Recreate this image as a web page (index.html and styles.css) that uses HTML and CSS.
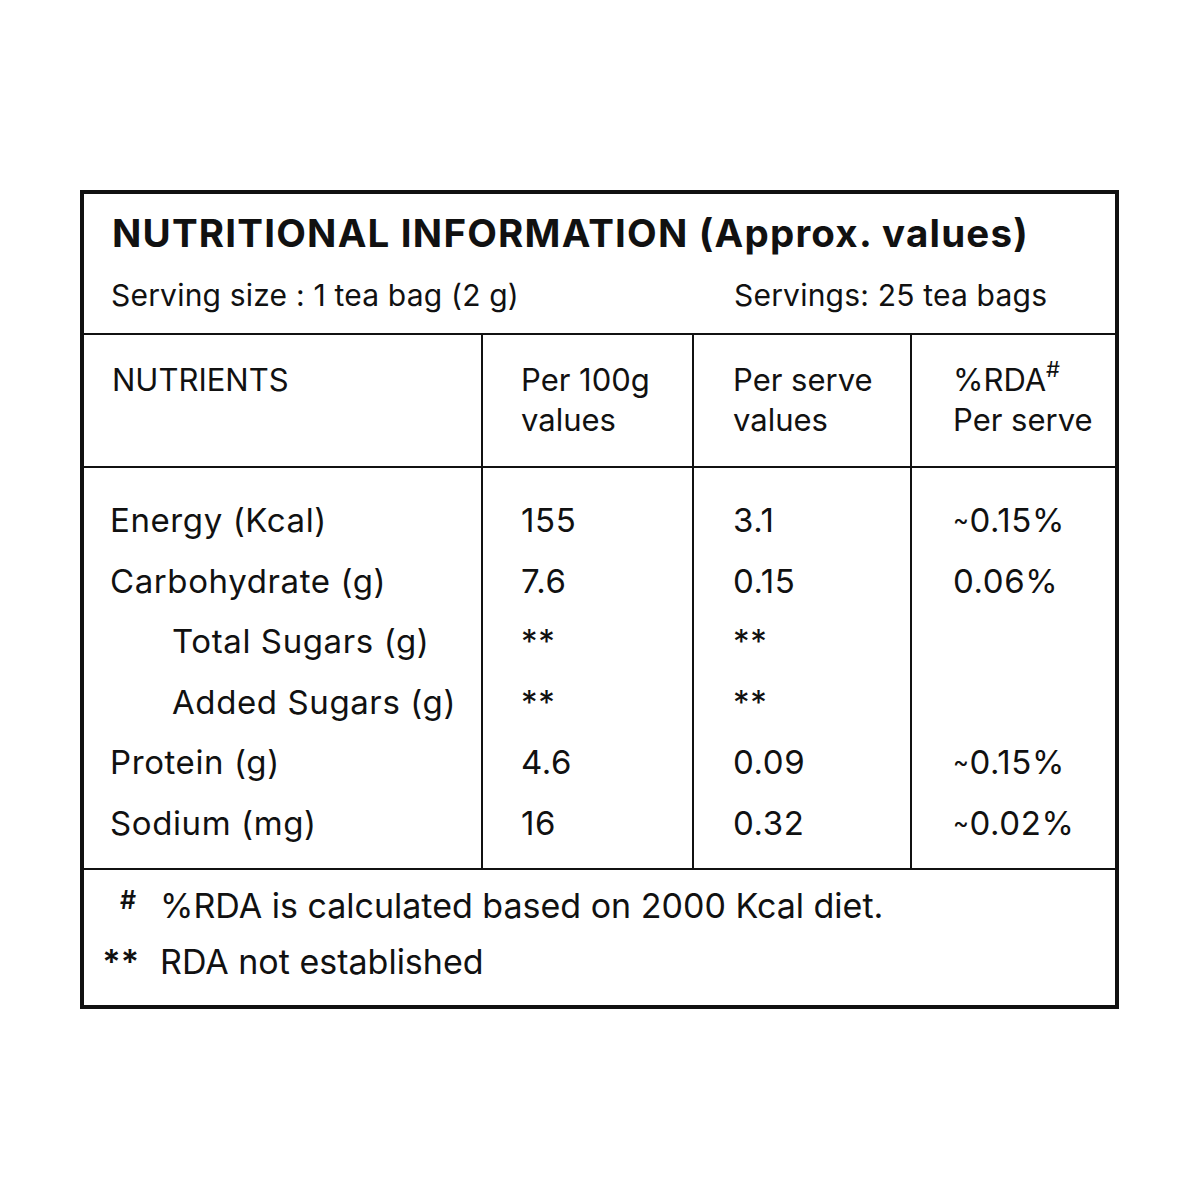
FILE: index.html
```html
<!DOCTYPE html>
<html>
<head>
<meta charset="utf-8">
<link rel="stylesheet" href="styles.css">
</head>
<body>
<div class="panel">
  <div class="head">
    <div class="title">NUTRITIONAL INFORMATION (Approx. values)</div>
    <div class="serving">
      <span>Serving size : 1 tea bag (2 g)</span>
      <span>Servings: 25 tea bags</span>
    </div>
  </div>
  <div class="grid">
    <div class="cell hcell c1">NUTRIENTS</div>
    <div class="cell hcell c2">Per 100g<br>values</div>
    <div class="cell hcell c3">Per serve<br>values</div>
    <div class="cell hcell c4">%RDA<sup class="hash">#</sup><br>Per serve</div>

    <div class="cell bcell c1">
      <div class="line">Energy (Kcal)</div>
      <div class="line">Carbohydrate (g)</div>
      <div class="line sub">Total Sugars (g)</div>
      <div class="line sub">Added Sugars (g)</div>
      <div class="line">Protein (g)</div>
      <div class="line">Sodium (mg)</div>
    </div>
    <div class="cell bcell c2">
      <div class="line">155</div>
      <div class="line">7.6</div>
      <div class="line">**</div>
      <div class="line">**</div>
      <div class="line">4.6</div>
      <div class="line">16</div>
    </div>
    <div class="cell bcell c3">
      <div class="line">3.1</div>
      <div class="line">0.15</div>
      <div class="line">**</div>
      <div class="line">**</div>
      <div class="line">0.09</div>
      <div class="line">0.32</div>
    </div>
    <div class="cell bcell c4">
      <div class="line"><span class="tilde">~</span>0.15%</div>
      <div class="line">0.06%</div>
      <div class="line">&nbsp;</div>
      <div class="line">&nbsp;</div>
      <div class="line"><span class="tilde">~</span>0.15%</div>
      <div class="line"><span class="tilde">~</span>0.02%</div>
    </div>
  </div>
  <div class="notes">
    <span class="mark hashmark">#</span><span class="note">%RDA is calculated based on 2000 Kcal diet.</span>
    <span class="mark">**</span><span class="note">RDA not established</span>
  </div>
</div>
</body>
</html>
```

FILE: styles.css
```css
html, body {
  margin: 0;
  padding: 0;
  background: #ffffff;
}
body {
  font-family: "Inter", "Noto Sans", sans-serif;
  color: #111111;
}
.panel {
  box-sizing: border-box;
  width: 1039px;
  height: 819px;
  margin: 190px 0 0 80px;
  border: 4px solid #111111;
  display: flex;
  flex-direction: column;
}
.head {
  padding: 15px 0 18px 27px;
  border-bottom: 2px solid #111111;
}
.title {
  font-weight: 700;
  font-size: 38.5px;
  line-height: 48px;
  letter-spacing: 1.2px;
  padding-left: 1px;
}
.serving {
  margin-top: 18px;
  display: grid;
  grid-template-columns: 623px 1fr;
  font-size: 30px;
  line-height: 40px;
  letter-spacing: 0.2px;
}
.grid {
  display: grid;
  grid-template-columns: 399px 211px 218px 203px;
}
.cell {
  box-sizing: border-box;
}
.c1, .c2, .c3 {
  border-right: 2px solid #111111;
}
.hcell {
  font-size: 31px;
  line-height: 40px;
  padding-top: 25px;
  padding-bottom: 26px;
  border-bottom: 2px solid #111111;
  height: 133px;
}
.hcell.c1 { padding-left: 28px; }
.c1 { padding-left: 26px; }
.c2 { padding-left: 38px; }
.c3 { padding-left: 39px; }
.c4 { padding-left: 41px; }
.hash {
  font-size: 22px;
  line-height: 0;
  vertical-align: 0;
  position: relative;
  top: -14px;
}
.bcell {
  font-size: 33px;
  line-height: 60.5px;
  letter-spacing: 0.6px;
  padding-top: 22px;
  padding-bottom: 15px;
  border-bottom: 2px solid #111111;
  height: 402px;
}
.line {
  height: 60.5px;
}
.line.sub {
  padding-left: 62px;
}
.tilde {
  font-size: 24px;
  line-height: 1;
  position: relative;
  top: -4px;
}
.notes {
  flex: 1;
  display: grid;
  grid-template-columns: 55px 1fr;
  grid-auto-rows: 56px;
  column-gap: 21px;
  padding-top: 8px;
  font-size: 34px;
  line-height: 56px;
}
.mark {
  text-align: right;
  font-size: 34px;
  font-weight: 600;
}
.hashmark {
  font-size: 25px;
  position: relative;
  top: -6px;
  padding-right: 3px;
}
```
